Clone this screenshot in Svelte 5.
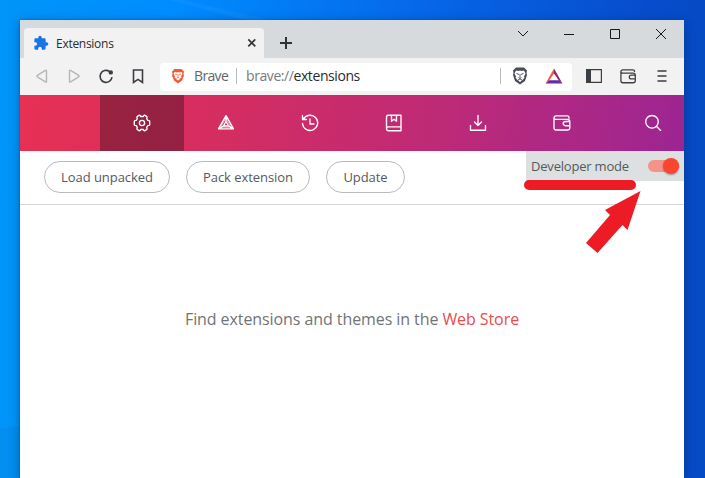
<script>
  const actions = [
    { label: 'Load unpacked', width: 126 },
    { label: 'Pack extension', width: 124 },
    { label: 'Update', width: 79 }
  ];
  const sections = ['settings', 'rewards', 'history', 'bookmarks', 'downloads', 'wallet'];
  let developerMode = $state(true);
</script>

{#snippet wallet()}
  <path d="M3.2 1.9h11q1.8 0 1.8 1.7v.6M3.2 1.9Q1 1.9 1 4v9.800q0 2.200 2.200 2.200h11.100q2.500 0 2.500-2.300M1 4q0 1.400 2 1.400h11.300q2.500 0 2.500 2.200v6.100M16.800 7.500h-4.300q-2.300 0-2.300 2.100t2.300 2.100h4.300" />
{/snippet}

<div class="desktop">
  <svg class="rays" viewBox="0 0 705 478" aria-hidden="true">
    <path d="M0 428 20 426V478H0Z" fill="#087ed2" opacity=".23" />
    <path d="M183 0 270 20H245L170 0Z" fill="#49a9ff" opacity=".14" />
  </svg>
  <div class="window">
    <header class="titlebar">
      <div class="tab">
        <svg class="puzzle" width="16" height="16" viewBox="0 0 24 24"><path fill="#1a73e8" d="M20.5 11H19V7a2 2 0 0 0-2-2h-4V3.5a2.5 2.5 0 0 0-5 0V5H4a2 2 0 0 0-2 2v3.8h1.5a2.7 2.7 0 1 1 0 5.4H2V20a2 2 0 0 0 2 2h3.8v-1.5a2.7 2.7 0 1 1 5.4 0V22H17a2 2 0 0 0 2-2v-4h1.5a2.5 2.5 0 0 0 0-5Z" /></svg>
        <span>Extensions</span>
        <svg class="close" width="10" height="10" viewBox="0 0 10 10"><path d="m1.3 1.3 7 7m0-7-7 7" fill="none" stroke="#333639" stroke-width="1.7" /></svg>
      </div>
      <svg class="plus" width="14" height="14" viewBox="0 0 14 14"><path d="M1 7h12M7 1v12" stroke="#303336" stroke-width="2" /></svg>
      <div class="controls">
        <svg width="46" height="28" viewBox="0 0 46 28"><path d="m18 11 5 5 5-5" /></svg>
        <svg width="46" height="28" viewBox="0 0 46 28"><path d="M18 14.5h10" /></svg>
        <svg width="46" height="28" viewBox="0 0 46 28"><path d="M18.5 9.5h9v9h-9z" /></svg>
        <svg width="46" height="28" viewBox="0 0 46 28"><path d="m18 9 10 10m0-10-10 10" /></svg>
      </div>
    </header>

    <div class="toolbar">
      <div class="tools left">
        <svg viewBox="0 0 18 18" class="disabled"><path d="M13.5 3v10.400q0 1.200-1.100.5L4.400 8.800q-1-.7 0-1.400l8-5q1.100-.6 1.100.6Z" /></svg>
        <svg viewBox="0 0 18 18" class="disabled"><path d="M4.500 3v10.400q0 1.200 1.100.5l8-5.100q1-.7 0-1.400l-8-5Q4.500 1.800 4.500 3Z" /></svg>
        <svg viewBox="0 0 18 18"><path stroke-width="1.6" d="M15 9.200a6 6 0 1 1-2.600-5.800" /><circle cx="13.800" cy="4.400" r="2.200" fill="#3b3e42" stroke="none" /></svg>
        <svg viewBox="0 0 18 18"><path stroke-width="1.6" d="M4.500 2h9v12.500L9 11.400l-4.500 3.100Z" /></svg>
      </div>
      <div class="address">
        <svg class="lion" width="14" height="16" viewBox="0 0 28 32">
          <path fill="#f15b33" d="M7 2h14l5 5-1 5 1 3-4 10-8 6-8-6-4-10 1-3-1-5Z" />
          <path fill="#fff" d="m7 8 5 1 2-1 2 1 5-1 2 3-3 6 1 2-3 2-4-1-4 1-3-2 1-2-3-6Zm3 14 4-2 4 2-4 3Z" />
          <path d="m8 12 4 1m8-1-4 1M14 12v6m-2 0 2 1 2-1" fill="none" stroke="#f15b33" stroke-width="1.500" />
        </svg>
        <span class="brand">Brave</span>
        <i class="rule"></i>
        <span class="url">brave://<b>extensions</b></span>
        <i class="rule end"></i>
        <svg class="shield" width="16" height="18" viewBox="0 0 32 36">
          <path fill="#484b59" d="M8 1h16l6 6-1 5 1 4-4 12-10 7-10-7-4-12 1-4-1-5Z" />
          <path fill="#fff" d="m8 7 5 1 3-1 3 1 5-1 3 6-3 6 1 2-3 4-6 5-6-5-3-4 1-2-3-6Z" />
          <path d="m9 13 5 2m9-2-5 2M16 14v7m-3 0 3 2 3-2M12 26l4-2 4 2" fill="none" stroke="#484b59" stroke-width="1.800" />
        </svg>
        <svg class="bat" width="18" height="16" viewBox="0 0 18 16"><path fill="#fa5738" d="M9 .5v5L4.300 12.200.5 15.500Z" /><path fill="#982462" d="m9 .5 8.500 15-3.800-3.300L9 5.500Z" /><path fill="#652da5" d="m.5 15.500 3.800-3.300h9.400l3.800 3.300Z" /></svg>
      </div>
      <div class="tools right">
        <svg viewBox="0 0 18 18"><path stroke-width="1.200" d="M1.600 1.600h14.800v12.800H1.600Z" /><path d="M2 2h4v12H2Z" fill="#3b3e42" stroke="none" /></svg>
        <svg viewBox="0 0 18 18"><g transform="translate(1 .2) scale(.91)">{@render wallet()}</g></svg>
        <svg viewBox="0 0 18 18"><path d="M4.500 3h9M4.500 8h9M4.500 13h9" stroke-width="1.600" /></svg>
      </div>
    </div>

    <nav>
      {#each sections as section}
        <button class:active={section === 'settings'} aria-label={section}>
          <svg width="18" height="18" viewBox="0 0 18 18">
            {#if section === 'settings'}
              <path d="M6.400 1.200q1 0 1.300 1.300h2.600q.3-1.300 1.300-1.300l2.300 1.400q.5.9-.2 2.100l1.100 1.700q1.300-.1 1.900.8v3.600q-.6.900-1.900.8l-1.100 1.700q.7 1.200.2 2.100l-2.300 1.400q-1 0-1.300-1.300H7.700q-.3 1.300-1.300 1.300l-2.300-1.400q-.5-.9.2-2.100l-1.100-1.700q-1.300.1-1.900-.8V7.200q.6-.9 1.900-.8l1.100-1.700q-.7-1.200-.2-2.100Z" /><circle cx="9" cy="9" r="2.600" />
            {:else if section === 'rewards'}
              <path d="m9 1.700 7.500 13.100h-15ZM9 7.500l2.500 4.500h-5ZM9 1.700v5.800M1.500 14.800 6.500 12m10 2.800-5-2.800" /><path d="m9 4.300 4.700 8.900H4.300Z" stroke-width=".6" />
            {:else if section === 'history'}
              <path d="M2.500 5A7.600 7.600 0 1 1 1.500 9.500M1.500 1.500v4h4M1.500 5.500l2-2M9 5v5h4" />
            {:else if section === 'bookmarks'}
              <path d="M16 13V1.200H3.300Q1.500 1.200 1.500 3v11.500q0 2.200 2.200 2.200h12.100M1.500 14.700q0-1.800 2.200-1.800H16v3.800M6.500 1.200v6L9 5.300l2.500 1.900v-6" />
            {:else if section === 'downloads'}
              <path d="M9 1.500v10M5.500 8 9 11.500 12.500 8M1.500 11.500v4.700h15v-4.700" />
            {:else}
              {@render wallet()}
            {/if}
          </svg>
        </button>
      {/each}
      <button class="search" aria-label="search"><svg width="18" height="18" viewBox="0 0 18 18"><circle cx="8" cy="7.800" r="6.300" /><path d="m12.600 12.400 4 4" /></svg></button>
    </nav>

    <div class="actions">
      {#each actions as action}
        <button style:width="{action.width}px">{action.label}</button>
      {/each}
      <div class="developer">
        <span>Developer mode</span>
        <button class="switch" class:on={developerMode} aria-label="Developer mode" onclick={() => (developerMode = !developerMode)}><i></i></button>
      </div>
    </div>

    <main><p>Find extensions and themes in the <span class="store">Web Store</span></p></main>
  </div>
  <svg class="annotation" viewBox="0 0 705 478" aria-hidden="true">
    <rect x="524" y="180" width="112" height="10" rx="5" />
    <path d="m640.500 191-13 39-5-5-25 28-11.500-10 24-28-5-5Z" />
  </svg>
</div>

<style>
  * { box-sizing: border-box; }
  .desktop { position: relative; width: 705px; height: 478px; padding: 20px 21px 0 20px; overflow: hidden; background: linear-gradient(90deg, #0095f9 0%, #008cff 25%, #0667e8 60%, #064ccc 93%, #064ac4 100%); font-family: "Open Sans", "Noto Sans", sans-serif; }
  .rays, .annotation { position: absolute; left: 0; top: 0; width: 705px; height: 478px; pointer-events: none; }
  .annotation { fill: #ed1c24; }
  .window { position: relative; width: 664px; height: 458px; background: #fff; box-shadow: 0 0 0 1px #0b4c9440, 0 2px 10px #00205570; }
  svg { flex: none; display: block; }
  button { font: inherit; padding: 0; border: 0; background: none; color: inherit; }
  .titlebar { height: 38px; display: flex; align-items: flex-end; background: #d6dadd; }
  .tab { width: 240px; height: 30px; margin-left: 4px; padding: 0 7px 0 9px; display: flex; align-items: center; background: #f2f2f2; border-radius: 4px 4px 0 0; color: #292c30; font-size: 12px; }
  .tab span { margin-left: 7px; letter-spacing: -.28px; }
  .close { margin-left: auto; }
  .plus { margin: 0 0 8px 15px; }
  .controls { display: flex; align-self: flex-start; margin-left: auto; fill: none; stroke: #15171a; stroke-width: 1; }
  .toolbar { height: 37px; padding-left: 6px; display: flex; align-items: center; background: #f2f2f2; }
  .tools { display: flex; fill: none; stroke: #3b3e42; stroke-width: 1.4; }
  .tools svg { width: 18px; height: 18px; margin: 0 7px; }
  .tools .disabled { stroke: #b4b6b9; }
  .right { margin-left: 5px; }
  .right svg { margin: 0 8px; }
  .address { width: 412px; height: 28px; margin-left: 6px; padding: 0 9px 2px 11px; display: flex; align-items: center; background: #fff; border-radius: 4px; font-size: 14px; color: #63666a; white-space: nowrap; }
  .brand { width: 42px; margin-left: 9px; letter-spacing: -.65px; }
  .rule { width: 1px; height: 16px; background: #b8babd; }
  .url { margin-left: 9px; color: #777a7e; letter-spacing: -.42px; }
  .url b { font-weight: 400; color: #292c30; }
  .end { margin-left: auto; }
  .shield { margin-left: 11px; }
  .bat { margin-left: 17px; }
  nav { height: 56px; display: flex; padding-left: 80px; background: linear-gradient(100deg, #e73153 0%, #d42d61 31%, #bc2a78 65%, #9c2593 100%); }
  nav button { width: 84px; display: flex; justify-content: center; align-items: center; }
  nav svg { fill: none; stroke: #fff; stroke-width: 1.35; stroke-linecap: round; stroke-linejoin: round; }
  .active { background: linear-gradient(90deg, #98223f, #942144); }
  .search { width: 60px; margin-left: 19px; }
  .actions { height: 54px; padding: 0 0 1px 24px; display: flex; align-items: center; gap: 16px; border-bottom: 1px solid #d6d6d8; color: #555a60; font-size: 13px; }
  .actions > button { height: 32px; padding-bottom: 1px; border: 1px solid #b7bac1; border-radius: 16px; letter-spacing: -.05px; }
  .developer { width: 158px; height: 30px; align-self: flex-start; margin-left: auto; padding: 0 5px; display: flex; align-items: center; justify-content: space-between; background: #dce0e0; }
  .developer span { letter-spacing: -.2px; white-space: nowrap; }
  .switch { width: 31px; height: 12px; border-radius: 6px; background: #b6babd; display: flex; align-items: center; }
  .switch i { flex: none; width: 16px; height: 16px; border-radius: 50%; background: #fff; box-shadow: 0 1px 2px #0005; }
  .on { background: #f59289; justify-content: flex-end; }
  .on i { background: #fb452f; }
  main { padding-top: 103px; text-align: center; color: #717476; font-size: 16px; line-height: 22px; }
  p { margin: 0; letter-spacing: -.08px; }
  .store { color: #ea4b4d; }
</style>
